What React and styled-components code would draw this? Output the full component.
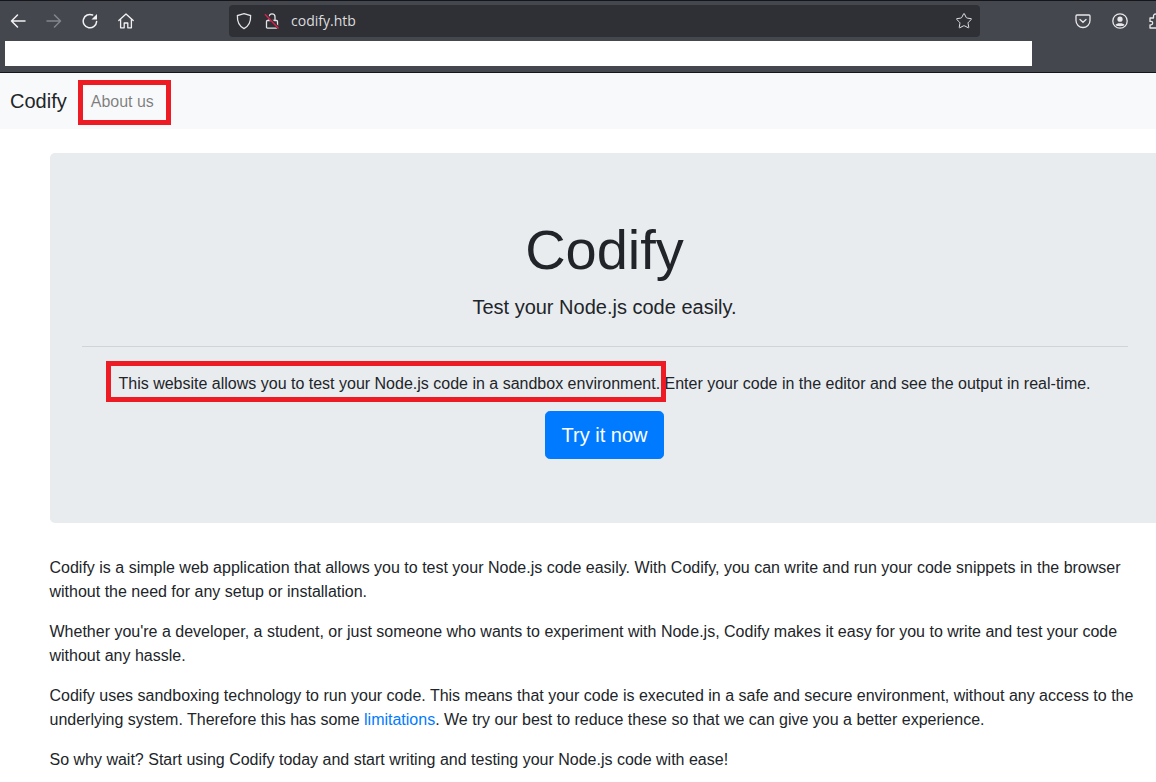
import React from "react";
import styled, { createGlobalStyle } from "styled-components";
import { Star } from "lucide-react";

const Global = createGlobalStyle`
html, body {
    margin: 0;
    padding: 0;
    background: #fff;
    overflow: hidden;
}
body {
    width: 1156px;
    height: 782px;
    font-family: "Liberation Sans", Arial, sans-serif;
    font-size: 16px;
    line-height: 24px;
    color: #212529;
}
`

const Browser = styled.div`
height: 73px;
box-sizing: border-box;
background: #45474f;
border-top: 1px solid #15151a;
border-bottom: 1px solid #15151a;
overflow: hidden;
`

const Toolbar = styled.div`
height: 32px;
margin-top: 4px;
display: flex;
align-items: center;
`

const NavIcons = styled.div`
width: 229px;
flex: none;
display: flex;
align-items: center;
color: #f2f2f3;
`

const IconSlot = styled.span`
width: 36px;
display: flex;
justify-content: center;
color: ${p => p.$dim ? "#85868b" : "inherit"};
`

const UrlBar = styled.div`
width: 751px;
height: 32px;
flex: none;
box-sizing: border-box;
padding: 0 7px;
gap: 10px;
border-radius: 4px;
background: #2f3036;
display: flex;
align-items: center;
color: #e4e4e6;
`

const UrlText = styled.span`
flex: 1;
margin-left: 1px;
font-family: "Open Sans", "Noto Sans", sans-serif;
font-size: 14px;
color: #dcdcde;
`

const RightIcons = styled.div`
flex: 1;
display: flex;
align-items: center;
padding-left: 95px;
gap: 20.5px;
color: #e8e8ea;
`

const WhiteStrip = styled.div`
width: 1027px;
height: 25px;
margin: 4px 0 0 5px;
background: #fff;
`

const Navbar = styled.nav`
height: 56px;
padding: 0 16px 0 10px;
background: #f8f9fa;
display: flex;
align-items: center;
`

const Brand = styled.a`
font-size: 20px;
line-height: 30px;
color: #212529;
margin-right: 16px;
`

const NavLink = styled.a`
padding: 9px 8px 7px;
color: rgba(0, 0, 0, 0.5);
`

const Container = styled.main`
width: 1140px;
margin-left: 34.5px;
padding: 24px 15px 0;
box-sizing: border-box;
`

const Jumbotron = styled.section`
height: 370px;
box-sizing: border-box;
padding: 63px 32px 64px;
margin-bottom: 33px;
border-radius: 4.8px;
background: #e9ecef;
text-align: center;
`

const Display = styled.h1`
margin: 0 0 9px;
font-size: 56px;
font-weight: 300;
line-height: 67px;
`

const Lead = styled.p`
margin: 0;
font-size: 20px;
line-height: 30px;
`

const Rule = styled.hr`
margin: 24px 0 25px;
border: 0;
border-top: 1px solid rgba(0, 0, 0, 0.1);
`

const Intro = styled.p`
margin: 0 0 15px;
`

const TryButton = styled.a`
display: inline-block;
padding: 8px 16px;
border: 1px solid #007bff;
font-size: 20px;
line-height: 30px;
color: #fff;
background: #007bff;
border-radius: 4.8px;
`

const Para = styled.p`
margin: 0 0 16px;
`

const Link = styled.a`
color: #007bff;
`

const Mark = styled.div`
position: absolute;
box-sizing: border-box;
border: 5px solid #ed1c24;
left: ${p => p.$x}px;
top: ${p => p.$y}px;
width: ${p => p.$w}px;
height: ${p => p.$h}px;
`

const LockIcon = styled.svg`
margin-left: 2px;
`

const PuzzleIcon = styled.svg`
flex: none;
`

const Back = () => (
    <svg width="16" height="16" viewBox="0 0 16 16" fill="none" stroke="currentColor" strokeWidth="1.5" strokeLinecap="round" strokeLinejoin="round">
        <path d="M1.5 8 H15 M7.5 2 L1.5 8 L7.5 14" />
    </svg>
)

const Forward = () => (
    <svg width="16" height="16" viewBox="0 0 16 16" fill="none" stroke="currentColor" strokeWidth="1.5" strokeLinecap="round" strokeLinejoin="round">
        <path d="M14.5 8 H1 M8.5 2 L14.5 8 L8.5 14" />
    </svg>
)

const Reload = () => (
    <svg width="16" height="16" viewBox="0 0 16 16" fill="none" stroke="currentColor" strokeWidth="1.5" strokeLinecap="round">
        <path d="M14.6 8.6 A6.7 6.7 0 1 1 10.6 2" />
        <path d="M15 1 V6.5 H9.5 Z" fill="currentColor" stroke="none" />
    </svg>
)

const Shield = () => (
    <svg width="16" height="18" viewBox="0 0 16 18" fill="none" stroke="currentColor" strokeWidth="1.3">
        <path d="M8 1.6 L14.6 3.6 C14.9 9.5 13 14 8 16.6 C3 14 1.1 9.5 1.4 3.6 Z" />
    </svg>
)

const BrokenLock = () => (
    <LockIcon width="16" height="18" viewBox="0 0 16 18" fill="none" strokeWidth="1.3">
        <path d="M5 8V4.8a3 3 0 0 1 6 0V8" stroke="#e4e4e6" />
        <path d="M2.5 9.5V15.2A1 1 0 0 0 3.5 16.2H12.5A1 1 0 0 0 13.5 15.2V9.5A1 1 0 0 0 12.5 8.5H3.5A1 1 0 0 0 2.5 9.5Z" stroke="#e4e4e6" />
        <path d="M1.5 2 L15 16.5" stroke="#2f3036" strokeWidth="2.6" />
        <path d="M1 2.2 L14.6 16.4" stroke="#d7224a" strokeWidth="1.4" />
    </LockIcon>
)

const Home = () => (
    <svg width="16" height="16" viewBox="0 0 16 16" fill="none" stroke="currentColor" strokeWidth="1.3" strokeLinejoin="round" strokeLinecap="round">
        <path d="M0.8 7.6 L8 0.9 L15.2 7.6 M2.6 6.2 V14.8 H6.2 V10 H9.8 V14.8 H13.4 V6.2" />
    </svg>
)

const Pocket = () => (
    <svg width="16" height="16" viewBox="0 0 16 16" fill="none" stroke="currentColor" strokeWidth="1.3" strokeLinecap="round">
        <path d="M2 2 H14 A1 1 0 0 1 15 3 V7.5 A7 7 0 0 1 1 7.5 V3 A1 1 0 0 1 2 2 Z" />
        <path d="M5 6.5 L8 9.3 L11 6.5" />
    </svg>
)

const Account = () => (
    <svg width="16" height="16" viewBox="0 0 16 16" fill="none" stroke="currentColor" strokeWidth="1.3">
        <circle cx="8" cy="8" r="7.2" />
        <circle cx="8" cy="6.2" r="2.6" fill="currentColor" stroke="none" />
        <path d="M3.4 12 C4.5 9.8 11.5 9.8 12.6 12 C11 13.6 5 13.6 3.4 12 Z" fill="currentColor" stroke="none" />
    </svg>
)

const Puzzle = () => (
    <PuzzleIcon width="16" height="16" viewBox="0 0 16 16" fill="none" stroke="currentColor" strokeWidth="1.3" strokeLinejoin="round">
        <path d="M2 5 H5.5 V3 A2 2 0 0 1 9.5 3 V5 H13 V8.5 H14.5 A2 2 0 0 1 14.5 12.5 H13 V15 H2 V11.8 H3 A1.6 1.6 0 0 0 3 8.4 H2 Z" />
    </PuzzleIcon>
)

export default function App() {
    return (
        <>
            <Global />
            <Browser>
                <Toolbar>
                    <NavIcons>
                        <IconSlot><Back /></IconSlot>
                        <IconSlot $dim><Forward /></IconSlot>
                        <IconSlot><Reload /></IconSlot>
                        <IconSlot><Home /></IconSlot>
                    </NavIcons>
                    <UrlBar>
                        <Shield />
                        <BrokenLock />
                        <UrlText>codify.htb</UrlText>
                        <Star size={18} strokeWidth={1.3} />
                    </UrlBar>
                    <RightIcons>
                        <Pocket />
                        <Account />
                        <Puzzle />
                    </RightIcons>
                </Toolbar>
                <WhiteStrip />
            </Browser>
            <Navbar>
                <Brand>Codify</Brand>
                <NavLink>About us</NavLink>
            </Navbar>
            <Container>
                <Jumbotron>
                    <Display>Codify</Display>
                    <Lead>Test your Node.js code easily.</Lead>
                    <Rule />
                    <Intro>This website allows you to test your Node.js code in a sandbox environment. Enter your code in the editor and see the output in real-time.</Intro>
                    <TryButton>Try it now</TryButton>
                </Jumbotron>
                <Para>Codify is a simple web application that allows you to test your Node.js code easily. With Codify, you can write and run your code snippets in the browser without the need for any setup or installation.</Para>
                <Para>Whether you're a developer, a student, or just someone who wants to experiment with Node.js, Codify makes it easy for you to write and test your code without any hassle.</Para>
                <Para>Codify uses sandboxing technology to run your code. This means that your code is executed in a safe and secure environment, without any access to the underlying system. Therefore this has some <Link>limitations</Link>. We try our best to reduce these so that we can give you a better experience.</Para>
                <Para>So why wait? Start using Codify today and start writing and testing your Node.js code with ease!</Para>
            </Container>
            <Mark $x={78} $y={80} $w={93} $h={45} />
            <Mark $x={106} $y={361} $w={560} $h={41} />
        </>
    )
}
